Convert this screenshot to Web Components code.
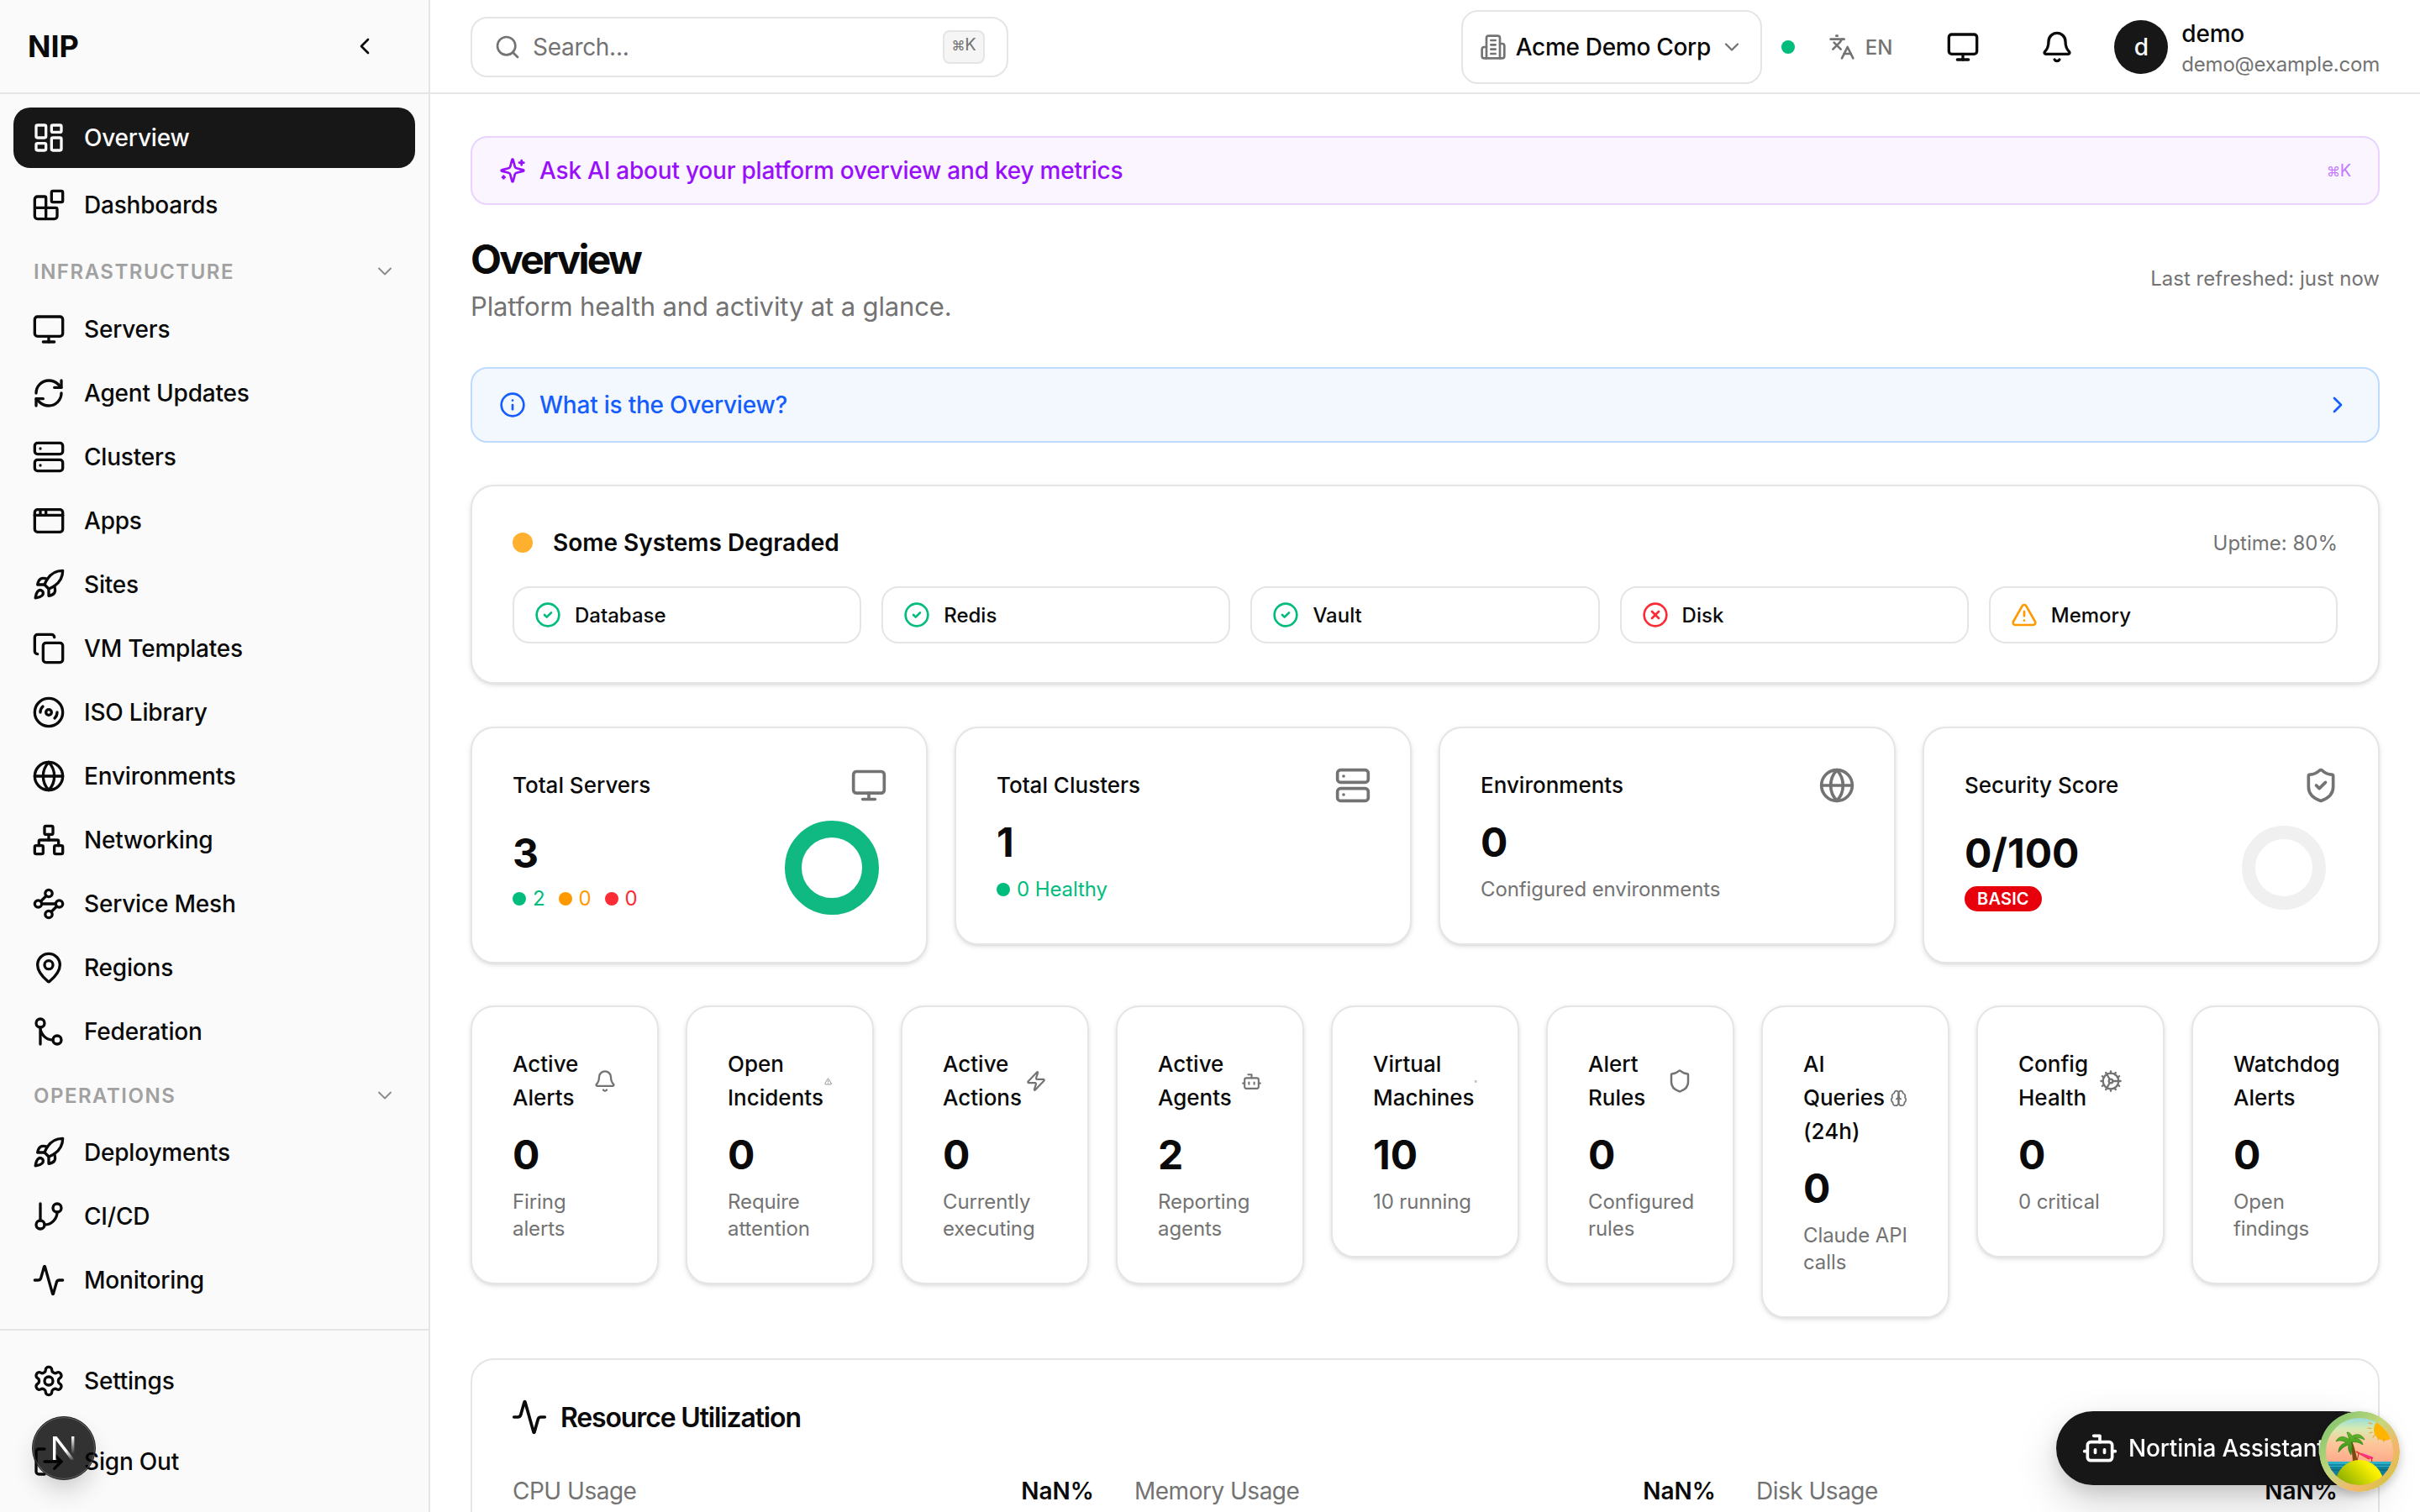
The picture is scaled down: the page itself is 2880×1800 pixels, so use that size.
<!DOCTYPE html>
<html lang="en">
<head>
<meta charset="utf-8">
<title>NIP - Overview</title>
<style>
    html, body {
        margin: 0;
        height: 100%;
        overflow: hidden;
        background: #fff;
        color: #0a0a0a;
        font-family: Inter, "Liberation Sans", sans-serif;
    }
    body {
        display: flex;
    }
</style>
</head>
<body>
<app-sidebar>
    <nav-item icon="layout-dashboard" active>Overview</nav-item>
    <nav-item icon="blocks" style="margin-top:4px">Dashboards</nav-item>
    <nav-label style="margin-top:23px;margin-bottom:13px">INFRASTRUCTURE</nav-label>
    <nav-item icon="monitor">Servers</nav-item>
    <nav-item icon="refresh-cw">Agent Updates</nav-item>
    <nav-item icon="server">Clusters</nav-item>
    <nav-item icon="app-window">Apps</nav-item>
    <nav-item icon="rocket">Sites</nav-item>
    <nav-item icon="copy">VM Templates</nav-item>
    <nav-item icon="disc-3">ISO Library</nav-item>
    <nav-item icon="globe">Environments</nav-item>
    <nav-item icon="network">Networking</nav-item>
    <nav-item icon="waypoints">Service Mesh</nav-item>
    <nav-item icon="map-pin">Regions</nav-item>
    <nav-item icon="git-merge">Federation</nav-item>
    <nav-label style="margin-top:20px;margin-bottom:12px">OPERATIONS</nav-label>
    <nav-item icon="rocket">Deployments</nav-item>
    <nav-item icon="git-branch">CI/CD</nav-item>
    <nav-item icon="activity">Monitoring</nav-item>
    <nav-item slot="footer" icon="settings">Settings</nav-item>
    <nav-item slot="footer" icon="log-out" style="margin-top:24px">Sign Out</nav-item>
</app-sidebar>

<app-main>
    <top-bar slot="header"></top-bar>

    <hint-bar variant="ai" icon="sparkles" shortcut>Ask AI about your platform overview and key metrics</hint-bar>
    <page-title title="Overview" subtitle="Platform health and activity at a glance." note="Last refreshed: just now"></page-title>
    <hint-bar variant="info" icon="info" chevron style="margin-top:48px">What is the Overview?</hint-bar>

    <status-card title="Some Systems Degraded" uptime="Uptime: 80%" style="margin-top:50px">
        <status-pill state="ok">Database</status-pill>
        <status-pill state="ok">Redis</status-pill>
        <status-pill state="ok">Vault</status-pill>
        <status-pill state="down">Disk</status-pill>
        <status-pill state="warn">Memory</status-pill>
    </status-card>

    <card-grid cols="4" gap="32" style="margin-top:51px">
        <kpi-card label="Total Servers" icon="monitor" value="3" ring="#10b981" ring-size="112" ring-width="20">
            <legend-dot color="#00bc7d">2</legend-dot>
            <legend-dot color="#fe9a00">0</legend-dot>
            <legend-dot color="#fb2c36">0</legend-dot>
        </kpi-card>
        <kpi-card label="Total Clusters" icon="server" value="1">
            <legend-dot color="#00bc7d">0 Healthy</legend-dot>
        </kpi-card>
        <kpi-card label="Environments" icon="globe" value="0">
            <span style="color:#737373">Configured environments</span>
        </kpi-card>
        <kpi-card label="Security Score" icon="shield-check" value="0/100" ring="#f0f0f0" ring-size="100" ring-width="16">
            <tier-badge>BASIC</tier-badge>
        </kpi-card>
    </card-grid>

    <card-grid cols="9" gap="32" style="margin-top:50px">
        <mini-card label="Active Alerts" icon="bell" icon-size="28" value="0">Firing alerts</mini-card>
        <mini-card label="Open Incidents" icon="triangle-alert" icon-size="9" value="0">Require attention</mini-card>
        <mini-card label="Active Actions" icon="zap" icon-size="26" value="0">Currently executing</mini-card>
        <mini-card label="Active Agents" icon="bot" icon-size="25" value="2">Reporting agents</mini-card>
        <mini-card label="Virtual Machines" icon="server" icon-size="3" value="10">10 running</mini-card>
        <mini-card label="Alert Rules" icon="shield" icon-size="30" value="0">Configured rules</mini-card>
        <mini-card label="AI Queries (24h)" icon="brain" icon-size="21" value="0"><span style="white-space:nowrap">Claude API</span> calls</mini-card>
        <mini-card label="Config Health" icon="cog" icon-size="28" value="0">0 critical</mini-card>
        <mini-card label="Watchdog Alerts" value="0">Open findings</mini-card>
    </card-grid>

    <resource-card title="Resource Utilization" style="margin-top:48px">
        <usage-row label="CPU Usage" value="NaN%"></usage-row>
        <usage-row label="Memory Usage" value="NaN%"></usage-row>
        <usage-row label="Disk Usage" value="NaN%"></usage-row>
    </resource-card>
</app-main>

<assistant-button>Nortinia Assistant</assistant-button>
<dev-indicator></dev-indicator>

<script>
const SHIELD = '<path d="M20 13c0 5-3.5 7.5-7.66 8.95a1 1 0 0 1-.67-.01C7.5 20.5 4 18 4 13V6a1 1 0 0 1 1-1c2 0 4.5-1.2 6.24-2.72a1.17 1.17 0 0 1 1.52 0C14.51 3.81 17 5 19 5a1 1 0 0 1 1 1z"/>';

const ICONS = {
    "layout-dashboard": '<rect width="7" height="9" x="3" y="3" rx="1"/><rect width="7" height="5" x="14" y="3" rx="1"/><rect width="7" height="9" x="14" y="12" rx="1"/><rect width="7" height="5" x="3" y="16" rx="1"/>',
    "blocks": '<path d="M10 22V7a1 1 0 0 0-1-1H4a2 2 0 0 0-2 2v12a2 2 0 0 0 2 2h12a2 2 0 0 0 2-2v-5a1 1 0 0 0-1-1H2"/><rect x="14" y="2" width="8" height="8" rx="1"/>',
    "monitor": '<rect width="20" height="14" x="2" y="3" rx="2"/><line x1="8" x2="16" y1="21" y2="21"/><line x1="12" x2="12" y1="17" y2="21"/>',
    "refresh-cw": '<path d="M3 12a9 9 0 0 1 9-9 9.75 9.75 0 0 1 6.74 2.74L21 8"/><path d="M21 3v5h-5"/><path d="M21 12a9 9 0 0 1-9 9 9.75 9.75 0 0 1-6.74-2.74L3 16"/><path d="M8 16H3v5"/>',
    "server": '<rect width="20" height="8" x="2" y="2" rx="2"/><rect width="20" height="8" x="2" y="14" rx="2"/><line x1="6" x2="6.01" y1="6" y2="6"/><line x1="6" x2="6.01" y1="18" y2="18"/>',
    "app-window": '<rect x="2" y="4" width="20" height="16" rx="2"/><path d="M10 4v4"/><path d="M2 8h20"/><path d="M6 4v4"/>',
    "rocket": '<path d="M4.5 16.5c-1.5 1.26-2 5-2 5s3.74-.5 5-2c.71-.84.7-2.13-.09-2.91a2.18 2.18 0 0 0-2.91-.09z"/><path d="m12 15-3-3a22 22 0 0 1 2-3.95A12.88 12.88 0 0 1 22 2c0 2.72-.78 7.5-6 11a22.35 22.35 0 0 1-4 2z"/><path d="M9 12H4s.55-3.03 2-4c1.62-1.08 5 0 5 0"/><path d="M12 15v5s3.03-.55 4-2c1.08-1.62 0-5 0-5"/>',
    "copy": '<rect width="14" height="14" x="8" y="8" rx="2"/><path d="M4 16c-1.1 0-2-.9-2-2V4c0-1.1.9-2 2-2h10c1.1 0 2 .9 2 2"/>',
    "disc-3": '<circle cx="12" cy="12" r="10"/><path d="M6 12c0-1.7.7-3.2 1.8-4.2"/><circle cx="12" cy="12" r="2"/><path d="M18 12c0 1.7-.7 3.2-1.8 4.2"/>',
    "globe": '<circle cx="12" cy="12" r="10"/><path d="M12 2a14.5 14.5 0 0 0 0 20 14.5 14.5 0 0 0 0-20"/><path d="M2 12h20"/>',
    "network": '<rect x="16" y="16" width="6" height="6" rx="1"/><rect x="2" y="16" width="6" height="6" rx="1"/><rect x="9" y="2" width="6" height="6" rx="1"/><path d="M5 16v-3a1 1 0 0 1 1-1h12a1 1 0 0 1 1 1v3"/><path d="M12 12V8"/>',
    "waypoints": '<circle cx="12" cy="4.5" r="2.5"/><path d="m10.2 6.3-3.9 3.9"/><circle cx="4.5" cy="12" r="2.5"/><path d="M7 12h10"/><circle cx="19.5" cy="12" r="2.5"/><path d="m13.8 17.7 3.9-3.9"/><circle cx="12" cy="19.5" r="2.5"/>',
    "map-pin": '<path d="M20 10c0 4.993-5.539 10.193-7.399 11.799a1 1 0 0 1-1.202 0C9.539 20.193 4 14.993 4 10a8 8 0 0 1 16 0"/><circle cx="12" cy="10" r="3"/>',
    "git-merge": '<circle cx="18" cy="18" r="3"/><circle cx="6" cy="6" r="3"/><path d="M6 21V9a9 9 0 0 0 9 9"/>',
    "git-branch": '<line x1="6" x2="6" y1="3" y2="15"/><circle cx="18" cy="6" r="3"/><circle cx="6" cy="18" r="3"/><path d="M18 9a9 9 0 0 1-9 9"/>',
    "activity": '<path d="M22 12h-2.48a2 2 0 0 0-1.93 1.46l-2.35 8.36a.25.25 0 0 1-.48 0L9.24 2.18a.25.25 0 0 0-.48 0l-2.35 8.36A2 2 0 0 1 4.49 12H2"/>',
    "settings": '<path d="M12.22 2h-.44a2 2 0 0 0-2 2v.18a2 2 0 0 1-1 1.73l-.43.25a2 2 0 0 1-2 0l-.15-.08a2 2 0 0 0-2.73.73l-.22.38a2 2 0 0 0 .73 2.73l.15.1a2 2 0 0 1 1 1.72v.51a2 2 0 0 1-1 1.74l-.15.09a2 2 0 0 0-.73 2.73l.22.38a2 2 0 0 0 2.73.73l.15-.08a2 2 0 0 1 2 0l.43.25a2 2 0 0 1 1 1.73V20a2 2 0 0 0 2 2h.44a2 2 0 0 0 2-2v-.18a2 2 0 0 1 1-1.73l.43-.25a2 2 0 0 1 2 0l.15.08a2 2 0 0 0 2.73-.73l.22-.39a2 2 0 0 0-.73-2.73l-.15-.08a2 2 0 0 1-1-1.74v-.5a2 2 0 0 1 1-1.74l.15-.09a2 2 0 0 0 .73-2.73l-.22-.38a2 2 0 0 0-2.73-.73l-.15.08a2 2 0 0 1-2 0l-.43-.25a2 2 0 0 1-1-1.73V4a2 2 0 0 0-2-2z"/><circle cx="12" cy="12" r="3"/>',
    "log-out": '<path d="M9 21H5a2 2 0 0 1-2-2V5a2 2 0 0 1 2-2h4"/><polyline points="16 17 21 12 16 7"/><line x1="21" x2="9" y1="12" y2="12"/>',
    "chevron-left": '<path d="m15 18-6-6 6-6"/>',
    "chevron-right": '<path d="m9 18 6-6-6-6"/>',
    "chevron-down": '<path d="m6 9 6 6 6-6"/>',
    "search": '<path d="m21 21-4.34-4.34"/><circle cx="11" cy="11" r="8"/>',
    "sparkles": '<path d="M9.937 15.5A2 2 0 0 0 8.5 14.063l-6.135-1.582a.5.5 0 0 1 0-.962L8.5 9.936A2 2 0 0 0 9.937 8.5l1.582-6.135a.5.5 0 0 1 .963 0L14.063 8.5A2 2 0 0 0 15.5 9.937l6.135 1.581a.5.5 0 0 1 0 .964L15.5 14.063a2 2 0 0 0-1.437 1.437l-1.582 6.135a.5.5 0 0 1-.963 0z"/><path d="M20 3v4"/><path d="M22 5h-4"/><path d="M4 17v2"/><path d="M5 18H3"/>',
    "building-2": '<path d="M6 22V4a2 2 0 0 1 2-2h8a2 2 0 0 1 2 2v18Z"/><path d="M6 12H4a2 2 0 0 0-2 2v6a2 2 0 0 0 2 2h2"/><path d="M18 9h2a2 2 0 0 1 2 2v9a2 2 0 0 1-2 2h-2"/><path d="M10 6h4"/><path d="M10 10h4"/><path d="M10 14h4"/><path d="M10 18h4"/>',
    "languages": '<path d="m5 8 6 6"/><path d="m4 14 6-6 2-3"/><path d="M2 5h12"/><path d="M7 2h1"/><path d="m22 22-5-10-5 10"/><path d="M14 18h6"/>',
    "bell": '<path d="M10.268 21a2 2 0 0 0 3.464 0"/><path d="M3.262 15.326A1 1 0 0 0 4 17h16a1 1 0 0 0 .74-1.673C19.41 13.956 18 12.499 18 8A6 6 0 0 0 6 8c0 4.499-1.411 5.956-2.738 7.326"/>',
    "info": '<circle cx="12" cy="12" r="10"/><path d="M12 16v-4"/><path d="M12 8h.01"/>',
    "circle-check": '<circle cx="12" cy="12" r="10"/><path d="m9 12 2 2 4-4"/>',
    "circle-x": '<circle cx="12" cy="12" r="10"/><path d="m15 9-6 6"/><path d="m9 9 6 6"/>',
    "triangle-alert": '<path d="m21.73 18-8-14a2 2 0 0 0-3.48 0l-8 14A2 2 0 0 0 4 21h16a2 2 0 0 0 1.73-3"/><path d="M12 9v4"/><path d="M12 17h.01"/>',
    "shield": SHIELD,
    "shield-check": SHIELD + '<path d="m9 12 2 2 4-4"/>',
    "zap": '<path d="M4 14a1 1 0 0 1-.78-1.63l9.9-10.2a.5.5 0 0 1 .86.46l-1.92 6.02A1 1 0 0 0 13 10h7a1 1 0 0 1 .78 1.63l-9.9 10.2a.5.5 0 0 1-.86-.46l1.92-6.02A1 1 0 0 0 11 14z"/>',
    "bot": '<path d="M12 8V4H8"/><rect width="16" height="12" x="4" y="8" rx="2"/><path d="M2 14h2"/><path d="M20 14h2"/><path d="M15 13v2"/><path d="M9 13v2"/>',
    "brain": '<path d="M12 5a3 3 0 1 0-5.997.125 4 4 0 0 0-2.526 5.77 4 4 0 0 0 .556 6.588A4 4 0 1 0 12 18Z"/><path d="M12 5a3 3 0 1 1 5.997.125 4 4 0 0 1 2.526 5.77 4 4 0 0 1-.556 6.588A4 4 0 1 1 12 18Z"/><path d="M15 13a4.5 4.5 0 0 1-3-4 4.5 4.5 0 0 1-3 4"/><path d="M12 5v13"/>',
    "cog": '<path d="M12 20a8 8 0 1 0 0-16 8 8 0 0 0 0 16Z"/><path d="M12 14a2 2 0 1 0 0-4 2 2 0 0 0 0 4Z"/><path d="M12 2v2"/><path d="M12 22v-2"/><path d="m17 20.66-1-1.73"/><path d="M11 10.27 7 3.34"/><path d="m20.66 17-1.73-1"/><path d="m3.34 7 1.73 1"/><path d="M14 12h8"/><path d="M2 12h2"/><path d="m20.66 7-1.73 1"/><path d="m3.34 17 1.73-1"/><path d="m17 3.34-1 1.73"/><path d="m11 13.73-4 6.93"/>'
};

class UiIcon extends HTMLElement {
    constructor() {
        super();
        this.shadowDOM = this.attachShadow({ mode: "open" });
    }

    connectedCallback() {
        const size = this.getAttribute("size") || 40;
        this.shadowDOM.innerHTML = `
        <style>
            :host { display: inline-flex; flex: none; }
            svg { display: block; }
        </style>
        <svg width="${size}" height="${size}" viewBox="0 0 24 24" fill="none" stroke="currentColor"
             stroke-width="${this.getAttribute("sw") || 2}" stroke-linecap="round" stroke-linejoin="round">${ICONS[this.getAttribute("name")] || ""}</svg>`;
    }
}

class NavItem extends HTMLElement {
    constructor() {
        super();
        this.shadowDOM = this.attachShadow({ mode: "open" });
    }

    connectedCallback() {
        this.shadowDOM.innerHTML = `
        <style>
            :host {
                display: flex;
                align-items: center;
                gap: 22px;
                height: 72px;
                padding-left: 22px;
                border-radius: 20px;
                font-size: 28px;
                font-weight: 500;
                letter-spacing: -.2px;
                color: #0a0a0a;
            }
            :host([active]) {
                background: #171717;
                color: #fafafa;
            }
        </style>
        <ui-icon name="${this.getAttribute("icon")}"></ui-icon>
        <slot></slot>`;
    }
}

class NavLabel extends HTMLElement {
    constructor() {
        super();
        this.shadowDOM = this.attachShadow({ mode: "open" });
    }

    connectedCallback() {
        this.shadowDOM.innerHTML = `
        <style>
            :host {
                display: flex;
                align-items: center;
                justify-content: space-between;
                height: 32px;
                padding: 0 22px 0 24px;
                font-size: 24px;
                font-weight: 600;
                letter-spacing: 1.5px;
                color: #a1a1a1;
            }
        </style>
        <slot></slot>
        <ui-icon name="chevron-down" size="28" sw="1.6" style="color:#8a8a8a"></ui-icon>`;
    }
}

class AppSidebar extends HTMLElement {
    constructor() {
        super();
        this.shadowDOM = this.attachShadow({ mode: "open" });
    }

    connectedCallback() {
        this.shadowDOM.innerHTML = `
        <style>
            :host {
                display: flex;
                flex-direction: column;
                flex: none;
                box-sizing: border-box;
                width: 512px;
                height: 100%;
                background: #fafafa;
                border-right: 2px solid #e5e5e5;
            }
            .brand {
                display: flex;
                align-items: center;
                justify-content: space-between;
                box-sizing: border-box;
                height: 112px;
                padding: 0 60px 0 33px;
                border-bottom: 2px solid #e5e5e5;
                font-size: 36px;
                font-weight: 700;
            }
            nav {
                flex: 1;
                display: flex;
                flex-direction: column;
                gap: 4px;
                padding: 16px 16px 0;
                overflow: hidden;
            }
            .foot {
                display: flex;
                flex-direction: column;
                box-sizing: border-box;
                height: 218px;
                padding: 24px 16px 0;
                border-top: 2px solid #e5e5e5;
            }
        </style>
        <div class="brand">NIP<ui-icon name="chevron-left" size="32"></ui-icon></div>
        <nav><slot></slot></nav>
        <div class="foot"><slot name="footer"></slot></div>`;
    }
}

class TopBar extends HTMLElement {
    constructor() {
        super();
        this.shadowDOM = this.attachShadow({ mode: "open" });
    }

    connectedCallback() {
        this.shadowDOM.innerHTML = `
        <style>
            :host {
                display: flex;
                align-items: center;
                flex: none;
                box-sizing: border-box;
                height: 112px;
                padding: 2px 48px 0;
                border-bottom: 2px solid #e5e5e5;
            }
            .search {
                display: flex;
                align-items: center;
                gap: 14px;
                box-sizing: border-box;
                width: 640px;
                height: 72px;
                padding: 0 26px;
                border: 2px solid #e5e5e5;
                border-radius: 20px;
                color: #737373;
                font-size: 28px;
                letter-spacing: -.3px;
            }
            kbd {
                margin-left: auto;
                box-sizing: border-box;
                width: 50px;
                height: 40px;
                background: #f5f5f5;
                border: 2px solid #e5e5e5;
                border-radius: 8px;
                font: 400 20px/30px Inter, "DejaVu Sans", sans-serif;
                text-align: center;
                color: #737373;
            }
            kbd span { font-size: 16px; }
            .tenant {
                display: flex;
                align-items: center;
                box-sizing: border-box;
                width: 358px;
                height: 88px;
                margin-left: auto;
                padding: 0 20px;
                border: 2px solid #e5e5e5;
                border-radius: 20px;
                font-size: 28px;
                font-weight: 500;
                letter-spacing: -.3px;
                white-space: nowrap;
            }
            .tenant span { margin: 0 auto 0 11px; }
            .dot {
                width: 16px;
                height: 16px;
                margin-left: 23px;
                border-radius: 50%;
                background: #00bc7d;
            }
            .lang {
                display: flex;
                align-items: center;
                gap: 12px;
                margin-left: 40px;
                color: #737373;
                font-size: 24px;
                font-weight: 500;
            }
            .avatar {
                display: flex;
                align-items: center;
                justify-content: center;
                width: 64px;
                height: 64px;
                margin-left: 48px;
                border-radius: 50%;
                background: #171717;
                color: #fafafa;
                font-size: 28px;
                font-weight: 500;
            }
            .user { margin: 3px 0 0 16px; }
            .user b { display: block; font-size: 28px; line-height: 38px; font-weight: 500; letter-spacing: -.2px; }
            .user small { display: block; font-size: 24px; line-height: 36px; color: #737373; letter-spacing: -.2px; }
        </style>
        <div class="search">
            <ui-icon name="search" size="32"></ui-icon>
            <span>Search...</span>
            <kbd><span>⌘</span>K</kbd>
        </div>
        <div class="tenant">
            <ui-icon name="building-2" size="32" style="color:#737373"></ui-icon>
            <span>Acme Demo Corp</span>
            <ui-icon name="chevron-down" size="28" style="color:#737373"></ui-icon>
        </div>
        <div class="dot"></div>
        <div class="lang"><ui-icon name="languages" size="32"></ui-icon>EN</div>
        <ui-icon name="monitor" style="margin-left:64px"></ui-icon>
        <ui-icon name="bell" style="margin-left:72px"></ui-icon>
        <div class="avatar">d</div>
        <div class="user"><b>demo</b><small>demo@example.com</small></div>`;
    }
}

class AppMain extends HTMLElement {
    constructor() {
        super();
        this.shadowDOM = this.attachShadow({ mode: "open" });
    }

    connectedCallback() {
        this.shadowDOM.innerHTML = `
        <style>
            :host {
                display: flex;
                flex-direction: column;
                flex: 1;
                min-width: 0;
                height: 100%;
                overflow: hidden;
            }
            .content {
                flex: 1;
                display: flex;
                flex-direction: column;
                padding: 50px 48px 0;
                overflow: hidden;
            }
        </style>
        <slot name="header"></slot>
        <div class="content"><slot></slot></div>`;
    }
}

class HintBar extends HTMLElement {
    constructor() {
        super();
        this.shadowDOM = this.attachShadow({ mode: "open" });
    }

    connectedCallback() {
        this.shadowDOM.innerHTML = `
        <style>
            :host {
                display: flex;
                align-items: center;
                flex: none;
                gap: 16px;
                box-sizing: border-box;
                padding: 0 32px;
                border-radius: 20px;
                font-size: 28px;
                font-weight: 500;
                letter-spacing: -.22px;
            }
            :host([variant="ai"]) {
                height: 82px;
                background: #faf5ff;
                border: 2px solid #e9d4ff;
                color: #9810fa;
            }
            :host([variant="info"]) {
                height: 90px;
                background: #f3f8ff;
                border: 2px solid #bedbff;
                color: #155dfc;
            }
            .end { margin-left: auto; }
            .kbd { font: 400 20px Inter, "DejaVu Sans", sans-serif; color: #c27aff; }
            .kbd span { font-size: 16px; }
        </style>
        <ui-icon name="${this.getAttribute("icon")}" size="32"></ui-icon>
        <slot></slot>
        ${this.hasAttribute("shortcut") ? `<span class="end kbd"><span>⌘</span>K</span>` : ""}
        ${this.hasAttribute("chevron") ? `<ui-icon class="end" name="chevron-right" size="32"></ui-icon>` : ""}`;
    }
}

class PageTitle extends HTMLElement {
    constructor() {
        super();
        this.shadowDOM = this.attachShadow({ mode: "open" });
    }

    connectedCallback() {
        this.shadowDOM.innerHTML = `
        <style>
            :host {
                display: flex;
                align-items: center;
                justify-content: space-between;
                flex: none;
                margin-top: 33px;
            }
            h1 {
                margin: 0;
                font-size: 48px;
                line-height: 64px;
                font-weight: 700;
                letter-spacing: -2.8px;
            }
            p { margin: 0; font-size: 31px; line-height: 48px; letter-spacing: -.13px; color: #737373; }
            .note { margin-bottom: 3px; font-size: 24px; color: #737373; }
        </style>
        <div>
            <h1>${this.getAttribute("title")}</h1>
            <p>${this.getAttribute("subtitle")}</p>
        </div>
        <span class="note">${this.getAttribute("note")}</span>`;
    }
}

class StatusCard extends HTMLElement {
    constructor() {
        super();
        this.shadowDOM = this.attachShadow({ mode: "open" });
    }

    connectedCallback() {
        this.shadowDOM.innerHTML = `
        <style>
            :host {
                display: block;
                flex: none;
                padding: 48px 48px 46px;
                background: #fff;
                border: 2px solid #e5e5e5;
                border-radius: 28px;
                box-shadow: 0 2px 6px rgba(0,0,0,.1), 0 2px 4px -2px rgba(0,0,0,.1);
            }
            .head {
                display: flex;
                align-items: center;
                height: 38px;
                margin-bottom: 33px;
            }
            .dot { width: 24px; height: 24px; border-radius: 50%; background: #ffb02e; }
            .name { margin-left: 24px; font-size: 28px; font-weight: 600; }
            .up { margin-left: auto; font-size: 24px; color: #737373; }
            .pills {
                display: grid;
                grid-template-columns: repeat(5, 1fr);
                gap: 24px;
            }
        </style>
        <div class="head">
            <span class="dot"></span>
            <span class="name">${this.getAttribute("title")}</span>
            <span class="up">${this.getAttribute("uptime")}</span>
        </div>
        <div class="pills"><slot></slot></div>`;
    }
}

class StatusPill extends HTMLElement {
    constructor() {
        super();
        this.shadowDOM = this.attachShadow({ mode: "open" });
    }

    connectedCallback() {
        const kinds = {
            ok: ["circle-check", "#00bc7d"],
            down: ["circle-x", "#fb2c36"],
            warn: ["triangle-alert", "#fe9a00"]
        };
        const [icon, color] = kinds[this.getAttribute("state")];
        this.shadowDOM.innerHTML = `
        <style>
            :host {
                display: flex;
                align-items: center;
                gap: 16px;
                box-sizing: border-box;
                height: 68px;
                padding: 0 24px;
                border: 2px solid #e5e5e5;
                border-radius: 20px;
                font-size: 24px;
                font-weight: 500;
            }
        </style>
        <ui-icon name="${icon}" size="32" style="color:${color}"></ui-icon>
        <slot></slot>`;
    }
}

class CardGrid extends HTMLElement {
    constructor() {
        super();
        this.shadowDOM = this.attachShadow({ mode: "open" });
    }

    connectedCallback() {
        this.shadowDOM.innerHTML = `
        <style>
            :host {
                display: grid;
                flex: none;
                grid-template-columns: repeat(${this.getAttribute("cols")}, minmax(0, 1fr));
                gap: ${this.getAttribute("gap")}px;
                align-items: start;
            }
        </style>
        <slot></slot>`;
    }
}

const CARD_CSS = `
    :host {
        display: block;
        box-sizing: border-box;
        padding: 48px;
        background: #fff;
        border: 2px solid #e5e5e5;
        border-radius: 28px;
        box-shadow: 0 2px 6px rgba(0,0,0,.1), 0 2px 4px -2px rgba(0,0,0,.1);
    }
    .head {
        display: flex;
        align-items: center;
        justify-content: space-between;
        font-size: 26px;
        line-height: 40px;
        font-weight: 500;
        margin-bottom: 20px;
    }
    .value {
        font-size: 48px;
        line-height: 56px;
        font-weight: 700;
    }
`;

class KpiCard extends HTMLElement {
    constructor() {
        super();
        this.shadowDOM = this.attachShadow({ mode: "open" });
    }

    connectedCallback() {
        const ringColor = this.getAttribute("ring");
        const size = Number(this.getAttribute("ring-size"));
        const width = Number(this.getAttribute("ring-width"));
        this.shadowDOM.innerHTML = `
        <style>
            ${CARD_CSS}
            .head ui-icon { margin: -2px -2px -2px 0; color: #737373; }
            .row { display: flex; align-items: center; justify-content: space-between; }
            .row.ring { height: 122px; }
            .foot {
                display: flex;
                align-items: center;
                gap: 16px;
                height: 28px;
                margin-top: 12px;
                font-size: 24px;
                line-height: 32px;
                letter-spacing: -.1px;
            }
            .row:not(.ring) .foot { height: 32px; }
            svg { display: block; }
        </style>
        <div class="head">${this.getAttribute("label")}<ui-icon name="${this.getAttribute("icon")}" size="44"></ui-icon></div>
        <div class="row ${ringColor ? "ring" : ""}">
            <div>
                <div class="value">${this.getAttribute("value")}</div>
                <div class="foot"><slot></slot></div>
            </div>
            ${ringColor ? `<svg width="128" height="122" viewBox="0 0 128 122"><circle cx="64" cy="58" r="${(size - width) / 2}" fill="none" stroke="${ringColor}" stroke-width="${width}"/></svg>` : ""}
        </div>`;
    }
}

class LegendDot extends HTMLElement {
    constructor() {
        super();
        this.shadowDOM = this.attachShadow({ mode: "open" });
    }

    connectedCallback() {
        const color = this.getAttribute("color");
        this.shadowDOM.innerHTML = `
        <style>
            :host { display: inline-flex; align-items: center; gap: 8px; color: ${color}; }
            i { width: 16px; height: 16px; border-radius: 50%; background: ${color}; }
        </style>
        <i></i><slot></slot>`;
    }
}

class TierBadge extends HTMLElement {
    constructor() {
        super();
        this.shadowDOM = this.attachShadow({ mode: "open" });
    }

    connectedCallback() {
        this.shadowDOM.innerHTML = `
        <style>
            :host {
                display: inline-flex;
                align-items: center;
                height: 30px;
                padding: 0 15px;
                border-radius: 15px;
                background: #e7000b;
                color: #fff;
                font-size: 20px;
                font-weight: 600;
                letter-spacing: .2px;
            }
        </style>
        <slot></slot>`;
    }
}

class MiniCard extends HTMLElement {
    constructor() {
        super();
        this.shadowDOM = this.attachShadow({ mode: "open" });
    }

    connectedCallback() {
        const icon = this.getAttribute("icon");
        this.shadowDOM.innerHTML = `
        <style>
            ${CARD_CSS}
            .head ui-icon { color: #737373; }
            .sub {
                margin-top: 12px;
                font-size: 24px;
                line-height: 32px;
                letter-spacing: -.1px;
                color: #737373;
            }
        </style>
        <div class="head">
            <span>${this.getAttribute("label")}</span>
            ${icon ? `<ui-icon name="${icon}" size="${this.getAttribute("icon-size")}"></ui-icon>` : ""}
        </div>
        <div class="value">${this.getAttribute("value")}</div>
        <div class="sub"><slot></slot></div>`;
    }
}

class ResourceCard extends HTMLElement {
    constructor() {
        super();
        this.shadowDOM = this.attachShadow({ mode: "open" });
    }

    connectedCallback() {
        this.shadowDOM.innerHTML = `
        <style>
            :host {
                display: block;
                flex: none;
                height: 400px;
                padding: 48px;
                background: #fff;
                border: 2px solid #e5e5e5;
                border-radius: 28px;
            }
            .head {
                display: flex;
                align-items: center;
                gap: 15px;
                height: 40px;
                font-size: 32px;
                font-weight: 600;
                letter-spacing: -1.15px;
            }
            .head ui-icon { margin-left: -2px; }
            .rows {
                display: grid;
                grid-template-columns: repeat(3, 1fr);
                gap: 48px;
                margin-top: 48px;
            }
        </style>
        <div class="head"><ui-icon name="activity" size="44"></ui-icon>${this.getAttribute("title")}</div>
        <div class="rows"><slot></slot></div>`;
    }
}

class UsageRow extends HTMLElement {
    constructor() {
        super();
        this.shadowDOM = this.attachShadow({ mode: "open" });
    }

    connectedCallback() {
        this.shadowDOM.innerHTML = `
        <style>
            :host {
                display: flex;
                justify-content: space-between;
                font-size: 28px;
                line-height: 40px;
            }
            span { color: #737373; letter-spacing: -.5px; }
            b { font-weight: 600; }
        </style>
        <span>${this.getAttribute("label")}</span><b>${this.getAttribute("value")}</b>`;
    }
}

class AssistantButton extends HTMLElement {
    constructor() {
        super();
        this.shadowDOM = this.attachShadow({ mode: "open" });
    }

    connectedCallback() {
        this.shadowDOM.innerHTML = `
        <style>
            :host {
                position: fixed;
                right: 48px;
                bottom: 32px;
                display: flex;
                align-items: center;
                gap: 12px;
                box-sizing: border-box;
                width: 385px;
                height: 88px;
                padding-left: 30px;
                border-radius: 44px;
                background: #171717;
                color: #fff;
                font-size: 28px;
                font-weight: 500;
                letter-spacing: -.2px;
                white-space: nowrap;
                box-shadow: 0 20px 50px rgba(0,0,0,.18), 0 8px 20px rgba(0,0,0,.1);
            }
            .pic {
                position: absolute;
                top: 0;
                right: -24px;
                border-radius: 50%;
                box-shadow: 0 4px 12px rgba(0,0,0,.2);
            }
        </style>
        <ui-icon name="bot" size="44"></ui-icon>
        <slot></slot>
        <svg class="pic" width="96" height="96" viewBox="0 0 96 96">
            <defs>
                <linearGradient id="ring" x1="0" y1="0" x2="1" y2="1">
                    <stop offset="0" stop-color="#6ec06a"/>
                    <stop offset=".45" stop-color="#c5d77c"/>
                    <stop offset=".7" stop-color="#f5b56a"/>
                    <stop offset="1" stop-color="#bcd22e"/>
                </linearGradient>
                <linearGradient id="sky" x1="0" y1="0" x2="0" y2="1">
                    <stop offset="0" stop-color="#6fd4f5"/>
                    <stop offset=".22" stop-color="#d8eab0"/>
                    <stop offset=".4" stop-color="#fdc69a"/>
                    <stop offset=".75" stop-color="#fd9c84"/>
                </linearGradient>
                <linearGradient id="hill" x1="0" y1="1" x2="1" y2="0">
                    <stop offset=".1" stop-color="#4d8c00"/>
                    <stop offset=".8" stop-color="#fff200"/>
                </linearGradient>
                <linearGradient id="leaf" x1="0" y1="0" x2="0" y2="1">
                    <stop offset="0" stop-color="#66bb2a"/>
                    <stop offset="1" stop-color="#2e8b1a"/>
                </linearGradient>
                <clipPath id="clip"><circle cx="48" cy="48" r="40"/></clipPath>
            </defs>
            <circle cx="48" cy="48" r="48" fill="url(#ring)"/>
            <g clip-path="url(#clip)">
                <rect width="96" height="96" fill="url(#sky)"/>
                <circle cx="78" cy="22" r="13" fill="#ffb400"/>
                <g stroke="#f79a2c" stroke-width="1.2" stroke-linecap="round">
                    <path d="M59 14l4 1M58 20l4 .5M60 26l3-1M64 31l2-2.5M70 34l1-3M77 36l0-3"/>
                </g>
                <path d="M40 64c0-10-1-20-5-30l3-1c4 9 7 20 8 31z" fill="#7a4a12"/>
                <path d="M36 34c-6-5-13-5-16 2 5-2 9-1 12 2-5 0-9 4-9 11 4-5 8-8 12-9-1 4 0 8 3 12 1-6 2-11 0-15 5-1 10 0 14 3-1-5-5-8-10-8 5-1 8 0 12 2-3-7-10-8-15-4-1-3-3-5-6-5z" fill="url(#leaf)" stroke="#2c7a18" stroke-width=".6"/>
                <path d="M44 48l16 9" stroke="#e8392f" stroke-width="2" fill="none"/>
                <path d="M50 51l14 5" stroke="#ff2f8a" stroke-width="2.4" fill="none"/>
                <path d="M47 50l-2 10M62 55l1 6" stroke="#c22" stroke-width="1"/>
                <rect y="60" width="96" height="6" fill="#2bb0c9"/>
                <rect y="66" width="96" height="12" fill="#0f7f97"/>
                <path d="M0 64h96M0 70h96" stroke="#0a5f78" stroke-width="1"/>
                <ellipse cx="48" cy="88" rx="29" ry="30" fill="url(#hill)"/>
            </g>
        </svg>`;
    }
}

class DevIndicator extends HTMLElement {
    constructor() {
        super();
        this.shadowDOM = this.attachShadow({ mode: "open" });
    }

    connectedCallback() {
        this.shadowDOM.innerHTML = `
        <style>
            :host {
                position: fixed;
                left: 38px;
                top: 1686px;
                display: flex;
                align-items: center;
                justify-content: center;
                box-sizing: border-box;
                width: 76px;
                height: 76px;
                border-radius: 50%;
                background: rgba(0,0,0,.8);
                border: 1px solid #222;
                box-shadow: inset 0 0 0 1px rgba(255,255,255,.22), 0 16px 32px -8px rgba(0,0,0,.24);
            }
        </style>
        <svg width="32" height="32" viewBox="0 0 32 32">
            <defs>
                <linearGradient id="a" x1="0" y1="0" x2="1" y2="1">
                    <stop offset=".6" stop-color="#fff"/>
                    <stop offset="1" stop-color="#fff" stop-opacity="0"/>
                </linearGradient>
                <linearGradient id="b" x1="0" y1="0" x2="0" y2="1">
                    <stop offset="0" stop-color="#fff"/>
                    <stop offset=".75" stop-color="#fff" stop-opacity="0"/>
                </linearGradient>
            </defs>
            <rect x="3" y="2" width="3.4" height="28" fill="#fff"/>
            <polygon points="3,2 7.5,2 29,30 24.5,30" fill="url(#a)"/>
            <rect x="25" y="2" width="3.4" height="28" fill="url(#b)"/>
        </svg>`;
    }
}

customElements.define("ui-icon", UiIcon);
customElements.define("nav-item", NavItem);
customElements.define("nav-label", NavLabel);
customElements.define("app-sidebar", AppSidebar);
customElements.define("top-bar", TopBar);
customElements.define("app-main", AppMain);
customElements.define("hint-bar", HintBar);
customElements.define("page-title", PageTitle);
customElements.define("status-card", StatusCard);
customElements.define("status-pill", StatusPill);
customElements.define("card-grid", CardGrid);
customElements.define("kpi-card", KpiCard);
customElements.define("legend-dot", LegendDot);
customElements.define("tier-badge", TierBadge);
customElements.define("mini-card", MiniCard);
customElements.define("resource-card", ResourceCard);
customElements.define("usage-row", UsageRow);
customElements.define("assistant-button", AssistantButton);
customElements.define("dev-indicator", DevIndicator);
</script>
</body>
</html>
